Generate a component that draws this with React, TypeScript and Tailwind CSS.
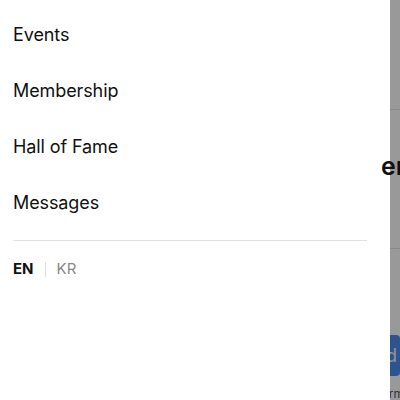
const items = ['Events', 'Membership', 'Hall of Fame', 'Messages'];

function PageBehind() {
  return (
    <div className="flex h-full w-full flex-col items-end bg-white text-[#111]">
      <div className="h-[111px] w-full border-b border-[#e5e5e5]" />
      <div className="h-[140px] w-full border-b border-[#e5e5e5]" />
      <div className="mt-[86px] flex h-[41px] w-[120px] items-center justify-end rounded bg-[#4a8df2] pr-[3px] text-[18px] text-[#f0f4ff]">
        Upload
      </div>
      <div className="mt-[12px] mr-[-4px] text-[12px] leading-none text-[#555]">Term</div>
    </div>
  );
}

export default function App() {
  return (
    <div
      className="relative h-[400px] w-[400px] overflow-hidden bg-white"
      style={{ fontFamily: 'Inter, "Noto Sans", sans-serif' }}
    >
      <PageBehind />
      <div className="absolute inset-0 bg-black/40" />
      <nav className="absolute top-0 bottom-0 left-0 w-[390px] bg-white pt-[6px] pr-[23px] pl-[13px]">
        <ul className="flex flex-col">
          {items.map((item) => (
            <li key={item} className="flex h-14 items-center text-[18px] tracking-[-0.1px] text-[#111]">
              {item}
            </li>
          ))}
        </ul>
        <div className="mt-[10px] h-px bg-[#e2e2e2]" />
        <div className="mt-[12px] flex h-[32px] items-center gap-[11px] text-[15px]">
          <span className="font-bold text-[#111]">EN</span>
          <span className="h-[15px] w-px bg-[#ddd]" />
          <span className="text-[#888]">KR</span>
        </div>
      </nav>
      <div className="absolute top-[148px] left-[381px] text-[25px] font-semibold text-[#111]">er</div>
    </div>
  );
}
